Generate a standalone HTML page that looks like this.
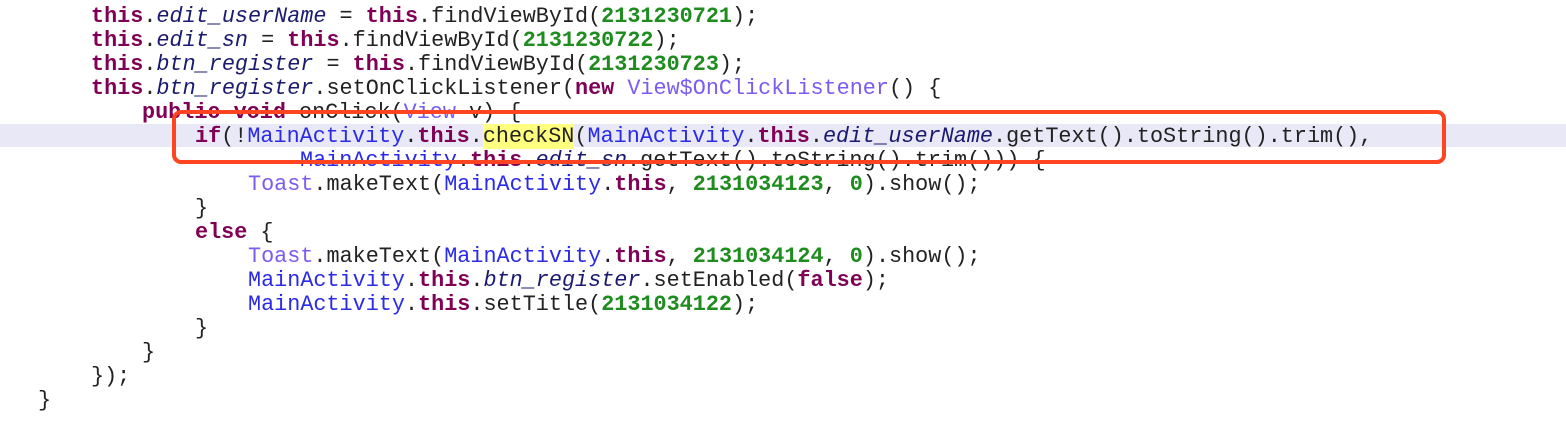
<!DOCTYPE html>
<html><head><meta charset="utf-8"><style>
html,body{margin:0;padding:0;background:#fff;width:1566px;height:428px;overflow:hidden;position:relative}
.l{position:absolute;white-space:pre;font-family:"Liberation Mono",monospace;font-size:21.8px;line-height:24px;color:#222;letter-spacing:0}
.k{color:#7f0055;font-weight:bold}
.f{color:#1a1a70;font-style:italic}
.n{color:#1e8c1e;font-weight:bold}
.c{color:#2a2ae8}
.t{color:#7a5cf0}
.h{background:#ffff80}
#band{position:absolute;left:0;top:124px;width:1566px;height:23px;background:#e8e8f6}
#box{position:absolute;left:172px;top:110px;width:1266px;height:46px;border:4px solid #ff4422;border-radius:9px}
</style></head><body>
<div id="band"></div>
<div class="l" style="left:91px;top:5px"><span class="k">this</span>.<span class="f">edit_userName</span> = <span class="k">this</span>.findViewById(<span class="n">2131230721</span>);</div>
<div class="l" style="left:91px;top:29px"><span class="k">this</span>.<span class="f">edit_sn</span> = <span class="k">this</span>.findViewById(<span class="n">2131230722</span>);</div>
<div class="l" style="left:91px;top:53px"><span class="k">this</span>.<span class="f">btn_register</span> = <span class="k">this</span>.findViewById(<span class="n">2131230723</span>);</div>
<div class="l" style="left:91px;top:77px"><span class="k">this</span>.<span class="f">btn_register</span>.setOnClickListener(<span class="k">new</span> <span class="t">View$OnClickListener</span>() {</div>
<div class="l" style="left:142px;top:101px"><span class="k">public</span> <span class="k">void</span> onClick(<span class="t">View</span> v) {</div>
<div class="l" style="left:195px;top:125px"><span class="k">if</span>(!<span class="c">MainActivity</span>.<span class="k">this</span>.<span class="h">checkSN</span>(<span class="c">MainActivity</span>.<span class="k">this</span>.<span class="f">edit_userName</span>.getText().toString().trim(),</div>
<div class="l" style="left:300px;top:149px"><span class="c">MainActivity</span>.<span class="k">this</span>.<span class="f">edit_sn</span>.getText().toString().trim())) {</div>
<div class="l" style="left:248px;top:173px"><span class="t">Toast</span>.makeText(<span class="c">MainActivity</span>.<span class="k">this</span>, <span class="n">2131034123</span>, <span class="n">0</span>).show();</div>
<div class="l" style="left:195px;top:197px">}</div>
<div class="l" style="left:195px;top:221px"><span class="k">else</span> {</div>
<div class="l" style="left:248px;top:245px"><span class="t">Toast</span>.makeText(<span class="c">MainActivity</span>.<span class="k">this</span>, <span class="n">2131034124</span>, <span class="n">0</span>).show();</div>
<div class="l" style="left:248px;top:269px"><span class="c">MainActivity</span>.<span class="k">this</span>.<span class="f">btn_register</span>.setEnabled(<span class="k">false</span>);</div>
<div class="l" style="left:248px;top:293px"><span class="c">MainActivity</span>.<span class="k">this</span>.setTitle(<span class="n">2131034122</span>);</div>
<div class="l" style="left:195px;top:317px">}</div>
<div class="l" style="left:142px;top:341px">}</div>
<div class="l" style="left:91px;top:365px">});</div>
<div class="l" style="left:38px;top:389px">}</div>
<div id="box"></div>
</body></html>
